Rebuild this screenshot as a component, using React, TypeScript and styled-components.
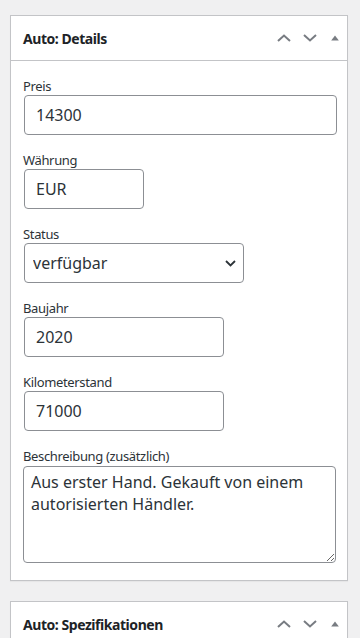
import React from "react";
import styled, { createGlobalStyle } from "styled-components";

const GlobalStyle = createGlobalStyle`
  html, body {
    margin: 0;
    padding: 0;
    background: #f0f0f1;
  }
  body {
    font-family: "Noto Sans", "Open Sans", sans-serif;
    color: #1d2327;
  }
  * {
    box-sizing: border-box;
  }
`;

const Page = styled.div`
  display: flex;
  flex-direction: column;
  gap: 20px;
  padding: 15px 12px 0 10px;
  height: 638px;
  overflow: hidden;
`;

const Postbox = styled.section`
  background: #fff;
  border: 1px solid #c3c4c7;
  box-shadow: 0 1px 1px rgba(0, 0, 0, 0.04);
  flex-shrink: 0;
`;

const Header = styled.div`
  display: flex;
  align-items: center;
  height: 45px;
  padding: 0 0 0 12px;
  border-bottom: 1px solid #c3c4c7;
`;

const Title = styled.h2`
  flex: 1;
  margin: 0;
  font-size: 14px;
  font-weight: 700;
  letter-spacing: -0.45px;
  color: #1d2327;
`;

const HandleActions = styled.div`
  display: flex;
  align-items: center;
`;

const HandleButton = styled.button<{ $w?: number }>`
  display: flex;
  align-items: center;
  justify-content: center;
  width: ${(p) => p.$w ?? 26}px;
  height: 30px;
  padding: 0;
  border: 0;
  background: none;
  color: #787c82;
  cursor: pointer;
`;

const Inside = styled.div`
  display: flex;
  flex-direction: column;
  gap: 16px;
  padding: 16px 11px 17px 12px;
`;

const Field = styled.div`
  display: flex;
  flex-direction: column;
`;

const Label = styled.label`
  font-size: 13px;
  line-height: 18px;
  color: #2c3338;
  letter-spacing: -0.35px;
`;

const TextInput = styled.input<{ $w?: number }>`
  width: ${(p) => (p.$w ? `${p.$w}px` : "100%")};
  height: 40px;
  margin-left: 1px;
  padding: 0 11px;
  border: 1px solid #8c8f94;
  border-radius: 4px;
  font-family: inherit;
  font-size: 16px;
  color: #2c3338;
  background: #fff;
  outline: none;
`;

const SelectWrap = styled.div<{ $w: number }>`
  position: relative;
  width: ${(p) => p.$w}px;
  margin-left: 1px;
`;

const Select = styled.select`
  appearance: none;
  width: 100%;
  height: 40px;
  padding: 0 30px 0 8px;
  border: 1px solid #8c8f94;
  border-radius: 4px;
  font-family: inherit;
  font-size: 16px;
  color: #2c3338;
  background: #fff;
  outline: none;
`;

const SelectArrow = styled.svg`
  position: absolute;
  right: 8px;
  top: 17px;
  pointer-events: none;
`;

const TextArea = styled.textarea`
  width: 100%;
  height: 97px;
  margin-top: 1px;
  padding: 4px 7px;
  border: 1px solid #8c8f94;
  border-radius: 4px;
  font-family: inherit;
  font-size: 16px;
  line-height: 22px;
  color: #2c3338;
  background: #fff;
  outline: none;
  resize: vertical;
`;

const ChevronUp = () => (
  <svg width="14" height="8" viewBox="0 0 14 8" fill="none">
    <path d="M1 7L7 1.5L13 7" stroke="currentColor" strokeWidth="2" />
  </svg>
);

const ChevronDown = () => (
  <svg width="14" height="8" viewBox="0 0 14 8" fill="none">
    <path d="M1 1L7 6.5L13 1" stroke="currentColor" strokeWidth="2" />
  </svg>
);

const Triangle = () => (
  <svg width="8" height="6" viewBox="0 0 8 6">
    <path d="M4 0.5L7.8 5.5H0.2Z" fill="currentColor" />
  </svg>
);

const BoxHeader = ({ title }: { title: string }) => (
  <Header>
    <Title>{title}</Title>
    <HandleActions>
      <HandleButton aria-label="Nach oben verschieben">
        <ChevronUp />
      </HandleButton>
      <HandleButton aria-label="Nach unten verschieben">
        <ChevronDown />
      </HandleButton>
      <HandleButton $w={24} aria-label="Ein-/Ausklappen">
        <Triangle />
      </HandleButton>
    </HandleActions>
  </Header>
);

const App = () => {
  return (
    <>
      <GlobalStyle />
      <Page>
        <Postbox>
          <BoxHeader title="Auto: Details" />
          <Inside>
            <Field>
              <Label>Preis</Label>
              <TextInput defaultValue="14300" />
            </Field>
            <Field>
              <Label>Währung</Label>
              <TextInput $w={120} defaultValue="EUR" />
            </Field>
            <Field>
              <Label>Status</Label>
              <SelectWrap $w={220}>
                <Select defaultValue="verfügbar">
                  <option value="verfügbar">verfügbar</option>
                  <option value="reserviert">reserviert</option>
                  <option value="verkauft">verkauft</option>
                </Select>
                <SelectArrow width="11" height="7" viewBox="0 0 11 7" fill="none">
                  <path d="M1 1L5.5 5.5L10 1" stroke="#2c3338" strokeWidth="1.8" />
                </SelectArrow>
              </SelectWrap>
            </Field>
            <Field>
              <Label>Baujahr</Label>
              <TextInput $w={200} defaultValue="2020" />
            </Field>
            <Field>
              <Label>Kilometerstand</Label>
              <TextInput $w={200} defaultValue="71000" />
            </Field>
            <Field>
              <Label>Beschreibung (zusätzlich)</Label>
              <TextArea defaultValue="Aus erster Hand. Gekauft von einem autorisierten Händler." />
            </Field>
          </Inside>
        </Postbox>
        <Postbox>
          <BoxHeader title="Auto: Spezifikationen" />
        </Postbox>
      </Page>
    </>
  );
};

export default App;
